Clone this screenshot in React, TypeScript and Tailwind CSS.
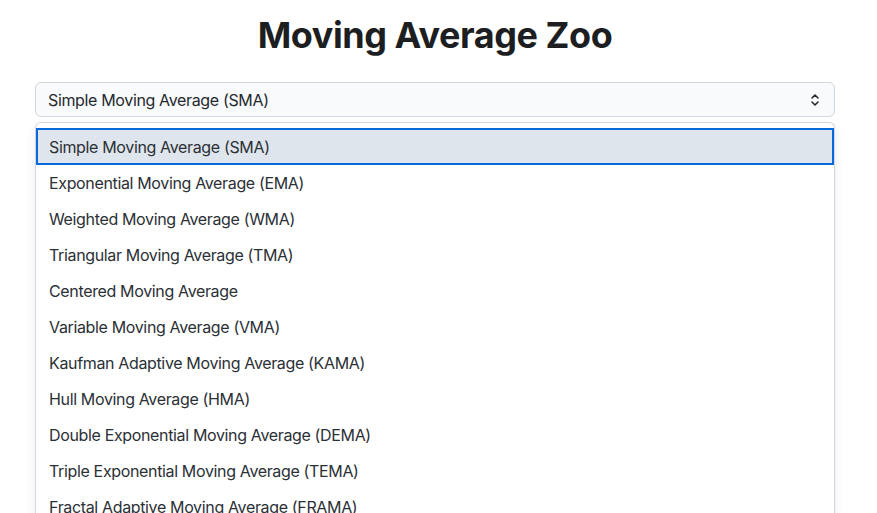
import React from 'react'

const options = [
  'Simple Moving Average (SMA)',
  'Exponential Moving Average (EMA)',
  'Weighted Moving Average (WMA)',
  'Triangular Moving Average (TMA)',
  'Centered Moving Average',
  'Variable Moving Average (VMA)',
  'Kaufman Adaptive Moving Average (KAMA)',
  'Hull Moving Average (HMA)',
  'Double Exponential Moving Average (DEMA)',
  'Triple Exponential Moving Average (TEMA)',
  'Fractal Adaptive Moving Average (FRAMA)',
  'Zero Lag Exponential Moving Average (ZLEMA)',
]

export default function App() {
  return (
    <div
      className="h-[513px] overflow-hidden bg-white pl-[35px] pr-[42px] text-[#212529]"
      style={{ fontFamily: 'Inter, "Noto Sans", sans-serif' }}
    >
      <h1 className="pt-[12px] text-center text-[36px] font-bold leading-[46px] tracking-[-0.45px] text-[#1c1e21]">
        Moving Average Zoo
      </h1>

      {/* closed select */}
      <div className="mt-[24px] flex h-[35px] items-center justify-between rounded-[6px] border border-[#d0d7de] bg-[#f9fafb] pl-[12px] pr-[14px] text-[16px] tracking-[-0.35px] text-[#24292f]">
        <span>Simple Moving Average (SMA)</span>
        <svg width="10" height="16" viewBox="0 0 10 16" fill="none" stroke="#24292f" strokeWidth="1.6" strokeLinecap="round" strokeLinejoin="round">
          <path d="M2 6 L5 3 L8 6" />
          <path d="M2 10 L5 13 L8 10" />
        </svg>
      </div>

      {/* open list */}
      <div className="mt-[5px] rounded-t-[6px] border border-b-0 border-[#d0d7de] bg-white pt-[5px] shadow-[0_4px_12px_rgba(0,0,0,0.08)]">
        {options.map((o, i) => (
          <div
            key={o}
            className={
              i === 0
                ? 'flex h-[37px] items-center border-2 border-[#0969da] bg-[#dfe5ec] pl-[11px] text-[16px] tracking-[-0.35px] text-[#2b3036]'
                : 'flex h-[36px] items-center pl-[13px] text-[16px] tracking-[-0.35px] text-[#2b3036]'
            }
          >
            {o}
          </div>
        ))}
      </div>
    </div>
  )
}
